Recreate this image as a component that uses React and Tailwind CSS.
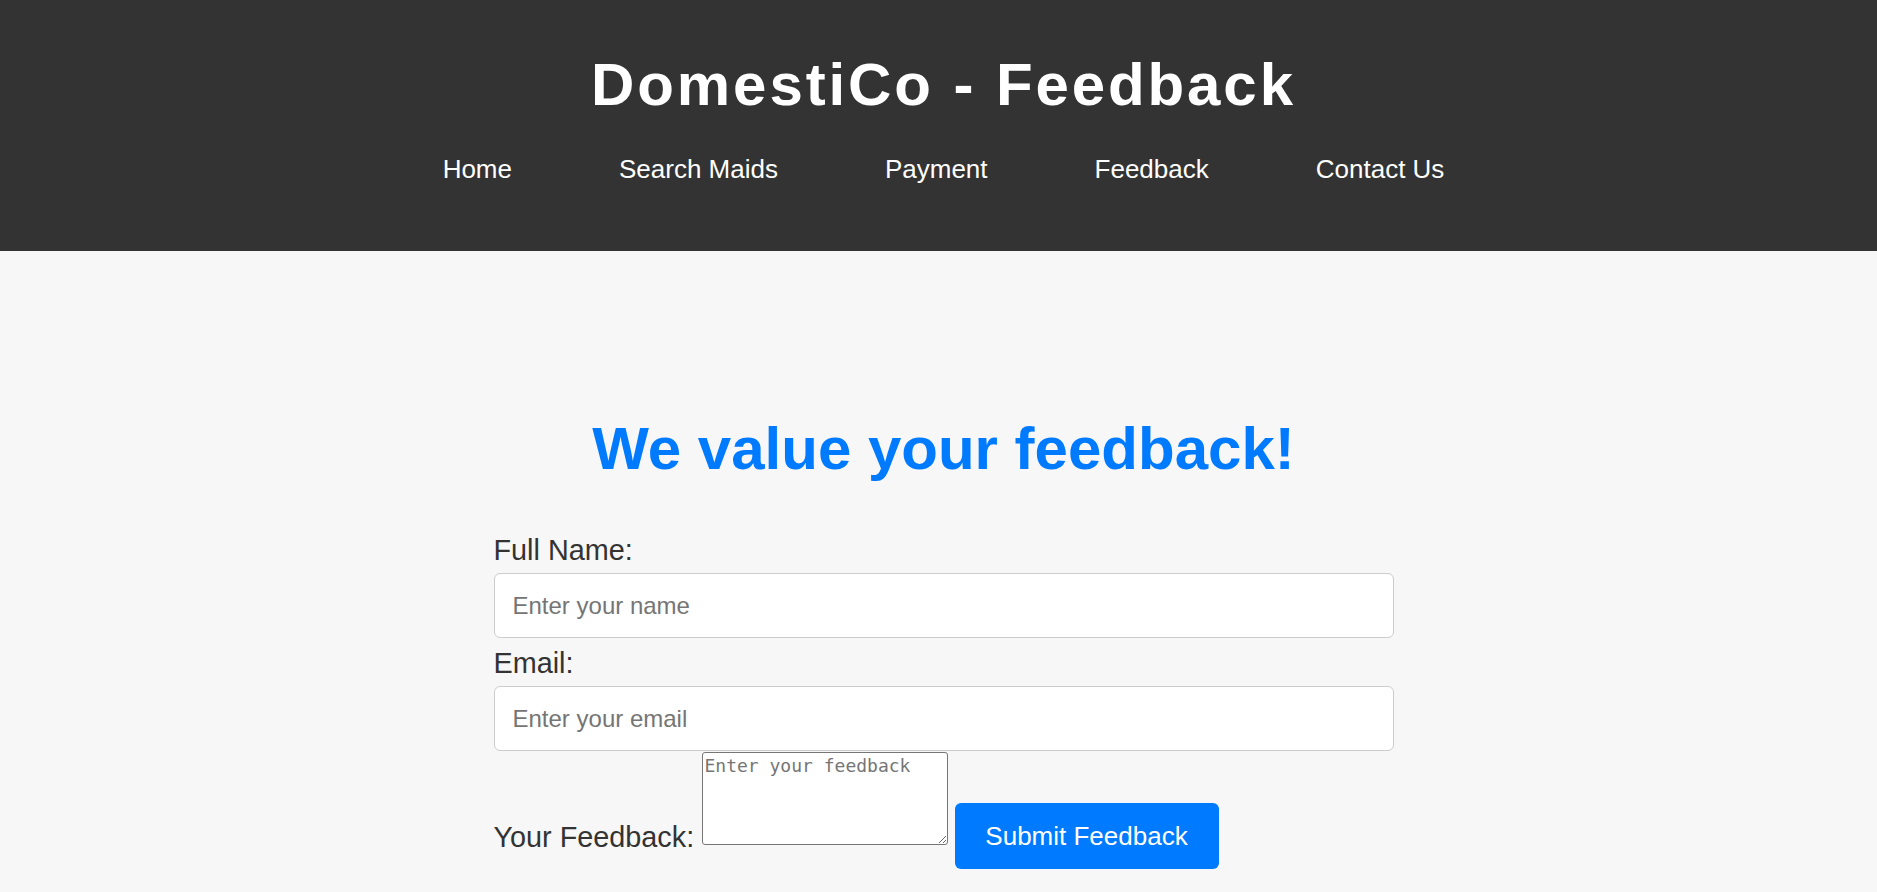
import React from "react";

const links = ["Home", "Search Maids", "Payment", "Feedback", "Contact Us"];

export default function App() {
  return (
    <div className="min-h-screen bg-[#f7f7f7] text-[#333] font-['Liberation_Sans',Arial,sans-serif]">
      {/* Header */}
      <header className="bg-[#333] text-white pt-[50px] pb-[67px]">
        <div className="pl-[10px] flex flex-col items-center">
          <h1 className="text-[60px] leading-[70px] font-bold tracking-[2.9px]">
            DomestiCo - Feedback
          </h1>
          <nav className="mt-[34px] flex justify-center gap-[107px]">
            {links.map((l) => (
              <a key={l} href="#" className="text-[26px] leading-[30px] text-white">
                {l}
              </a>
            ))}
          </nav>
        </div>
      </header>

      {/* Feedback form */}
      <main className="pl-[10px] flex flex-col items-center">
        <h2 className="mt-[163px] text-[60px] leading-[70px] font-bold text-[#007bff]">
          We value your feedback!
        </h2>

        <form className="mt-[50px] w-[900px] flex flex-col" onSubmit={(e) => e.preventDefault()}>
          <label className="text-[28.8px] leading-[32px]">Full Name:</label>
          <input
            type="text"
            placeholder="Enter your name"
            className="mt-[7px] h-[65px] w-full bg-white border border-[#ccc] rounded-[6px] pl-[18px] text-[24px] placeholder:text-[#757575] outline-none"
          />
          <label className="mt-[9px] text-[28.8px] leading-[32px]">Email:</label>
          <input
            type="email"
            placeholder="Enter your email"
            className="mt-[7px] h-[65px] w-full bg-white border border-[#ccc] rounded-[6px] pl-[18px] text-[24px] placeholder:text-[#757575] outline-none"
          />

          <div className="mt-[1px] flex items-start">
            <label className="mt-[69px] w-[199px] shrink-0 whitespace-nowrap text-[28.8px] leading-[32px]">
              Your Feedback:
            </label>
            <textarea
              placeholder="Enter your feedback"
              className="ml-[9px] w-[246px] h-[93px] bg-white border border-[#767676] rounded-[3px] p-[2px] text-[18px] leading-[22px] font-['DejaVu_Sans_Mono',monospace] placeholder:text-[#757575] outline-none"
            />
            <button
              type="submit"
              className="ml-[7px] mt-[51px] w-[264px] h-[66px] bg-[#007bff] text-white text-[26px] rounded-[6px]"
            >
              Submit Feedback
            </button>
          </div>
        </form>
      </main>
    </div>
  );
}
